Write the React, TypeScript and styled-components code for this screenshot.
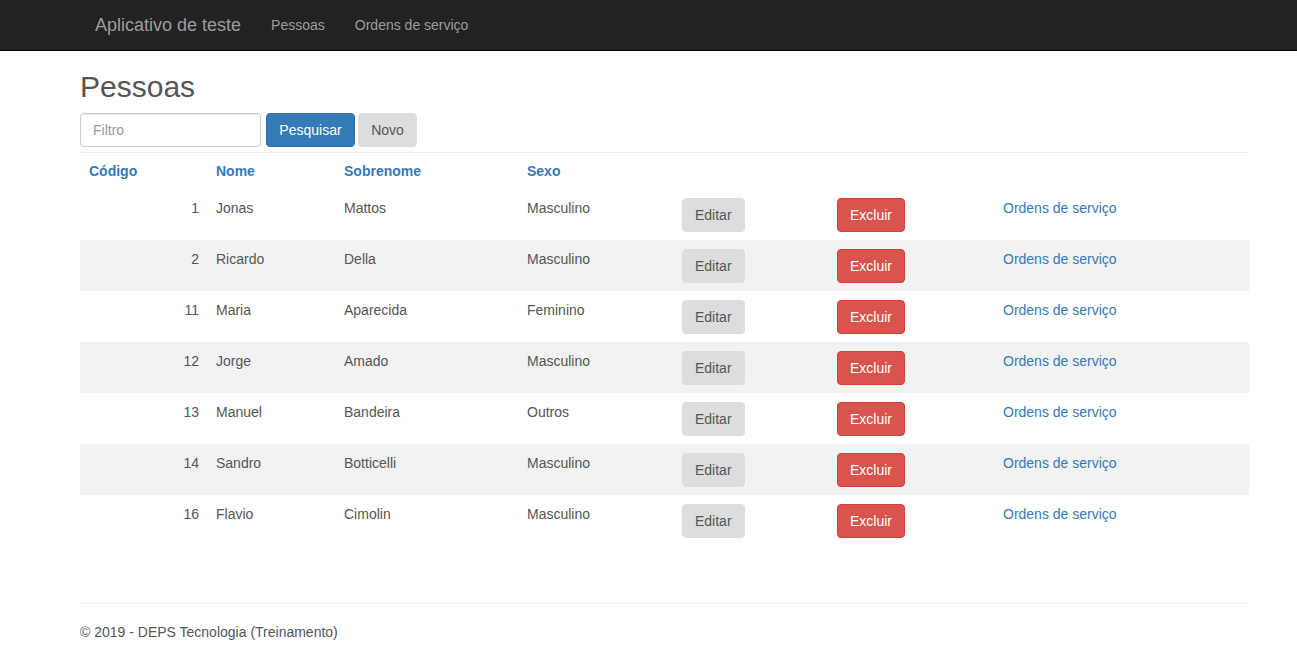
import React from "react";
import styled, { createGlobalStyle } from "styled-components";

const GlobalStyle = createGlobalStyle`
  html, body { margin: 0; padding: 0; }
  body {
    font-family: "Liberation Sans", Arial, sans-serif;
    font-size: 14px;
    line-height: 20px;
    color: #555;
    background: #fff;
    overflow: hidden;
  }
  * { box-sizing: border-box; }
`;

const Navbar = styled.nav`
  height: 51px;
  background: #222;
  border-bottom: 1px solid #080808;
`;

const NavInner = styled.div`
  display: flex;
  align-items: center;
  height: 50px;
  padding-left: 80px;
`;

const Brand = styled.a`
  padding: 15px;
  font-size: 18px;
  line-height: 20px;
  color: #9d9d9d;
  text-decoration: none;
`;

const NavLink = styled.a`
  padding: 15px;
  font-size: 14px;
  line-height: 20px;
  color: #9d9d9d;
  text-decoration: none;
`;

const Container = styled.main`
  width: 1249px;
  padding-left: 80px;
`;

const Title = styled.h2`
  margin: 19px 0 10px;
  font-size: 30px;
  line-height: 33px;
  font-weight: 500;
  color: #555;
`;

const SearchForm = styled.form`
  display: flex;
  align-items: center;
  height: 34px;
`;

const Input = styled.input`
  width: 181px;
  height: 34px;
  padding: 6px 12px;
  border: 1px solid #ccc;
  border-radius: 4px;
  font-family: inherit;
  font-size: 14px;
  color: #555;
  box-shadow: inset 0 1px 1px rgba(0, 0, 0, 0.075);
  &::placeholder { color: #999; }
`;

const Button = styled.button<{ $variant: "primary" | "default" | "danger" }>`
  height: 34px;
  padding: 6px 12px;
  border-radius: 4px;
  font-family: inherit;
  font-size: 14px;
  line-height: 20px;
  cursor: pointer;
  border: 1px solid
    ${(p) => (p.$variant === "primary" ? "#2e6da4" : p.$variant === "danger" ? "#d43f3a" : "#ddd")};
  background: ${(p) => (p.$variant === "primary" ? "#337ab7" : p.$variant === "danger" ? "#d9534f" : "#ddd")};
  color: ${(p) => (p.$variant === "default" ? "#555" : "#fff")};
`;

const SearchButton = styled(Button)`
  margin-left: 5px;
  width: 89px;
`;

const NewButton = styled(Button)`
  margin-left: 3px;
  width: 59px;
`;

const Rule = styled.hr<{ $top: number; $bottom: number }>`
  border: 0;
  border-top: 1px solid #eee;
  margin: ${(p) => p.$top}px 0 ${(p) => p.$bottom}px;
`;

const Table = styled.table`
  width: 1169px;
  border-collapse: collapse;
  table-layout: fixed;
`;

const HeadCell = styled.th<{ $first?: boolean }>`
  padding: 8px 8px 8px ${(p) => (p.$first ? "9px" : "8px")};
  text-align: left;
  font-weight: bold;
  line-height: 20px;
  height: 36px;
  vertical-align: top;
  a { color: #337ab7; text-decoration: none; }
`;

const Row = styled.tr<{ $striped: boolean }>`
  background: ${(p) => (p.$striped ? "#f2f2f2" : "transparent")};
`;

const Cell = styled.td<{ $right?: boolean }>`
  padding: 9px ${(p) => (p.$right ? "9px" : "8px")} 8px 8px;
  height: 51px;
  vertical-align: top;
  line-height: 20px;
  text-align: ${(p) => (p.$right ? "right" : "left")};
`;

const Link = styled.a`
  color: #337ab7;
  text-decoration: none;
`;

const Footer = styled.footer`
  p { margin: 0; line-height: 20px; }
`;

const people = [
  { id: 1, nome: "Jonas", sobrenome: "Mattos", sexo: "Masculino" },
  { id: 2, nome: "Ricardo", sobrenome: "Della", sexo: "Masculino" },
  { id: 11, nome: "Maria", sobrenome: "Aparecida", sexo: "Feminino" },
  { id: 12, nome: "Jorge", sobrenome: "Amado", sexo: "Masculino" },
  { id: 13, nome: "Manuel", sobrenome: "Bandeira", sexo: "Outros" },
  { id: 14, nome: "Sandro", sobrenome: "Botticelli", sexo: "Masculino" },
  { id: 16, nome: "Flavio", sobrenome: "Cimolin", sexo: "Masculino" },
];

const widths = [128, 128, 183, 155, 155, 166, 254];

export default function App() {
  return (
    <>
      <GlobalStyle />
      <Navbar>
        <NavInner>
          <Brand href="#">Aplicativo de teste</Brand>
          <NavLink href="#">Pessoas</NavLink>
          <NavLink href="#">Ordens de serviço</NavLink>
        </NavInner>
      </Navbar>
      <Container>
        <Title>Pessoas</Title>
        <SearchForm onSubmit={(e) => e.preventDefault()}>
          <Input placeholder="Filtro" />
          <SearchButton $variant="primary" type="submit">Pesquisar</SearchButton>
          <NewButton $variant="default" type="button">Novo</NewButton>
        </SearchForm>
        <Rule $top={5} $bottom={0} />
        <Table>
          <colgroup>
            {widths.map((w, i) => (
              <col key={i} style={{ width: w }} />
            ))}
          </colgroup>
          <thead>
            <tr>
              <HeadCell $first><a href="#">Código</a></HeadCell>
              <HeadCell><a href="#">Nome</a></HeadCell>
              <HeadCell><a href="#">Sobrenome</a></HeadCell>
              <HeadCell><a href="#">Sexo</a></HeadCell>
              <HeadCell />
              <HeadCell />
              <HeadCell />
            </tr>
          </thead>
          <tbody>
            {people.map((p, i) => (
              <Row key={p.id} $striped={i % 2 === 1}>
                <Cell $right>{p.id}</Cell>
                <Cell>{p.nome}</Cell>
                <Cell>{p.sobrenome}</Cell>
                <Cell>{p.sexo}</Cell>
                <Cell>
                  <Button $variant="default">Editar</Button>
                </Cell>
                <Cell>
                  <Button $variant="danger">Excluir</Button>
                </Cell>
                <Cell>
                  <Link href="#">Ordens de serviço</Link>
                </Cell>
              </Row>
            ))}
          </tbody>
        </Table>
        <Rule $top={57} $bottom={18} />
        <Footer>
          <p>© 2019 - DEPS Tecnologia (Treinamento)</p>
        </Footer>
      </Container>
    </>
  );
}
